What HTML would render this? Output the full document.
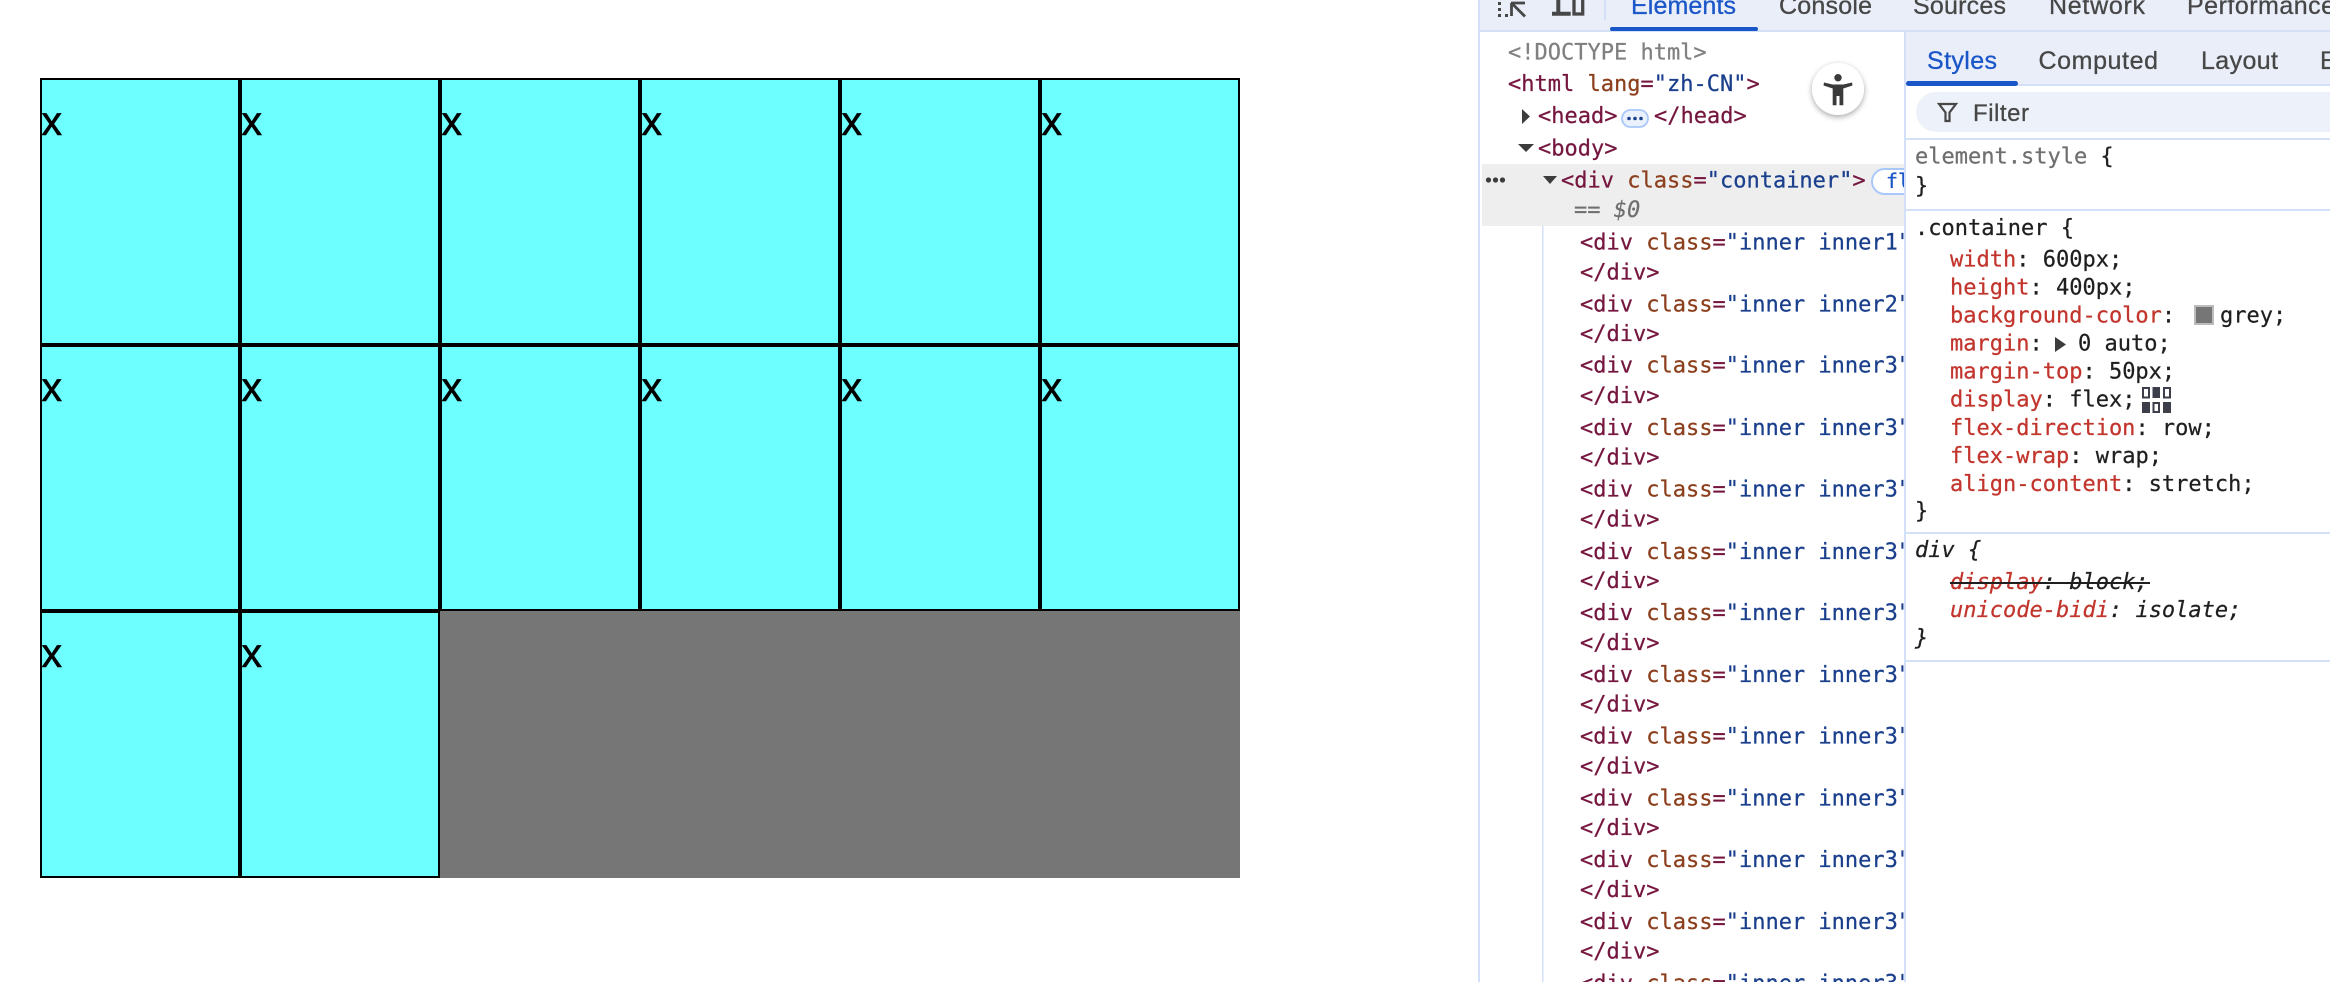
<!DOCTYPE html>
<html lang="zh-CN">
<head>
<meta charset="utf-8">
<title>Flex container</title>
<style>
html,body{margin:0;padding:0;background:#fff;width:2330px;height:982px;overflow:hidden}
svg{display:block}
.x{font:41px "Liberation Sans",Arial,sans-serif;fill:#000;stroke:#000;stroke-width:.6}
.tab{font:25px "Liberation Sans",Arial,sans-serif;fill:#474747;stroke:#474747;stroke-width:.3}
.act{fill:#1a56c8;stroke:#1a56c8}
.d{font:22px "DejaVu Sans Mono","Liberation Mono",monospace;fill:#75163f;stroke:#75163f;stroke-width:.25}
.n{fill:#8c3f1d;stroke:#8c3f1d}
.v{fill:#1a3f8c;stroke:#1a3f8c}
.s{font:22px "DejaVu Sans Mono","Liberation Mono",monospace;fill:#1f1f1f;stroke:#1f1f1f;stroke-width:.25}
.p{fill:#c2352d;stroke:#c2352d}
.g{fill:#6f6f6f;stroke:#6f6f6f}
.i{font-style:italic}
.c{fill:#6dffff;stroke:#000;stroke-width:2}
</style>
</head>
<body>
<svg xmlns="http://www.w3.org/2000/svg" width="2330" height="982" viewBox="0 0 2330 982">
<defs>
<clipPath id="dom"><rect x="1480" y="32" width="424" height="950"/></clipPath>
<filter id="sh" x="-40%" y="-40%" width="180%" height="180%"><feDropShadow dx="0" dy="2" stdDeviation="3" flood-color="#000" flood-opacity=".35"/></filter>
</defs>

<!-- page -->
<rect x="40" y="78" width="1200" height="800" fill="#767676"/>
<rect class="c" x="41" y="79" width="198" height="265"/>
<rect class="c" x="241" y="79" width="198" height="265"/>
<rect class="c" x="441" y="79" width="198" height="265"/>
<rect class="c" x="641" y="79" width="198" height="265"/>
<rect class="c" x="841" y="79" width="198" height="265"/>
<rect class="c" x="1041" y="79" width="198" height="265"/>
<rect class="c" x="41" y="346" width="198" height="264"/>
<rect class="c" x="241" y="346" width="198" height="264"/>
<rect class="c" x="441" y="346" width="198" height="264"/>
<rect class="c" x="641" y="346" width="198" height="264"/>
<rect class="c" x="841" y="346" width="198" height="264"/>
<rect class="c" x="1041" y="346" width="198" height="264"/>
<rect class="c" x="41" y="612" width="198" height="265"/>
<rect class="c" x="241" y="612" width="198" height="265"/>
<text class="x" x="41.500" y="135">x</text><text class="x" x="241.500" y="135">x</text><text class="x" x="441.500" y="135">x</text><text class="x" x="641.500" y="135">x</text><text class="x" x="841.500" y="135">x</text><text class="x" x="1041.500" y="135">x</text>
<text class="x" x="41.500" y="401">x</text><text class="x" x="241.500" y="401">x</text><text class="x" x="441.500" y="401">x</text><text class="x" x="641.500" y="401">x</text><text class="x" x="841.500" y="401">x</text><text class="x" x="1041.500" y="401">x</text>
<text class="x" x="41.500" y="667">x</text><text class="x" x="241.500" y="667">x</text>

<!-- devtools frame -->
<rect x="1478" y="0" width="852" height="982" fill="#fff"/>
<rect x="1478" y="0" width="2" height="982" fill="#d3e0f7"/>
<rect x="1480" y="0" width="850" height="30" fill="#e9eef9"/>
<rect x="1480" y="30" width="850" height="2" fill="#d3e0f7"/>
<rect x="1604" y="0" width="2" height="20" fill="#d3e0f7"/>
<rect x="1610" y="27" width="148" height="4" rx="2" fill="#1a56c8"/>

<!-- toolbar icons -->
<g fill="#474747">
<rect x="1498" y="2" width="3" height="3"/><rect x="1498" y="8" width="3" height="3"/><rect x="1498" y="14" width="3" height="3"/><rect x="1505" y="14" width="3" height="3"/>
</g>
<path d="M1511 3H1525M1511.500 3V16M1511.500 3L1525 16.500" fill="none" stroke="#474747" stroke-width="2.800"/>
<path d="M1558.300 0V13.500M1552 13.800H1570.700" fill="none" stroke="#474747" stroke-width="4"/>
<rect x="1574" y="-3" width="8.700" height="17" fill="none" stroke="#474747" stroke-width="3.300"/>

<!-- top tabs -->
<text class="tab act" x="1631" y="14" textLength="105">Elements</text>
<text class="tab" x="1779" y="14" textLength="93">Console</text>
<text class="tab" x="1913" y="14" textLength="93">Sources</text>
<text class="tab" x="2049" y="14" textLength="96">Network</text>
<text class="tab" x="2187" y="14" textLength="148">Performance</text>

<!-- elements panel -->
<rect x="1482" y="164" width="422" height="62" fill="#eeeeee"/>
<rect x="1542" y="226" width="1.500" height="756" fill="#d3e0f7"/>
<circle cx="1488.500" cy="180" r="2.600" fill="#3c3c3c"/><circle cx="1495.500" cy="180" r="2.600" fill="#3c3c3c"/><circle cx="1502.500" cy="180" r="2.600" fill="#3c3c3c"/>
<path d="M1522 109L1530 116.500L1522 124Z" fill="#3c3c3c"/>
<path d="M1518 144H1534L1526 152Z" fill="#3c3c3c"/>
<path d="M1543 176H1557L1550 184Z" fill="#3c3c3c"/>

<g clip-path="url(#dom)">
<text class="d" x="1508" y="59.500" style="fill:#808080;stroke:#808080">&lt;!DOCTYPE html&gt;</text>
<text class="d" x="1508" y="91">&lt;html <tspan class="n">lang</tspan>=<tspan class="v">"zh-CN"</tspan>&gt;</text>
<text class="d" x="1538" y="123">&lt;head&gt;</text>
<text class="d" x="1654" y="123">&lt;/head&gt;</text>
<text class="d" x="1538" y="155.700">&lt;body&gt;</text>
<text class="d" x="1561" y="187.700">&lt;div <tspan class="n">class</tspan>=<tspan class="v">"container"</tspan>&gt;</text>
<text class="d" x="1574" y="217.200" style="fill:#6f6f6f;stroke:#6f6f6f">== <tspan font-style="italic">$0</tspan></text>
<rect x="1872" y="169" width="60" height="25" rx="12.500" fill="#fff" stroke="#a8c7fa" stroke-width="2"/>
<text class="d" x="1886" y="188" style="fill:#1a56c8;stroke:#1a56c8;font-size:20px">fl</text>

<text class="d" x="1580" y="249.700">&lt;div <tspan class="n">class</tspan>=<tspan class="v">"inner inner1"</tspan></text>
<text class="d" x="1580" y="279.500">&lt;/div&gt;</text>
<text class="d" x="1580" y="311.400">&lt;div <tspan class="n">class</tspan>=<tspan class="v">"inner inner2"</tspan></text>
<text class="d" x="1580" y="341.200">&lt;/div&gt;</text>
<text class="d" x="1580" y="372.700">&lt;div <tspan class="n">class</tspan>=<tspan class="v">"inner inner3"</tspan></text>
<text class="d" x="1580" y="403">&lt;/div&gt;</text>
<text class="d" x="1580" y="434.900">&lt;div <tspan class="n">class</tspan>=<tspan class="v">"inner inner3"</tspan></text>
<text class="d" x="1580" y="464.700">&lt;/div&gt;</text>
<text class="d" x="1580" y="496.700">&lt;div <tspan class="n">class</tspan>=<tspan class="v">"inner inner3"</tspan></text>
<text class="d" x="1580" y="526.500">&lt;/div&gt;</text>
<text class="d" x="1580" y="558.800">&lt;div <tspan class="n">class</tspan>=<tspan class="v">"inner inner3"</tspan></text>
<text class="d" x="1580" y="588.200">&lt;/div&gt;</text>
<text class="d" x="1580" y="620.200">&lt;div <tspan class="n">class</tspan>=<tspan class="v">"inner inner3"</tspan></text>
<text class="d" x="1580" y="650">&lt;/div&gt;</text>
<text class="d" x="1580" y="681.900">&lt;div <tspan class="n">class</tspan>=<tspan class="v">"inner inner3"</tspan></text>
<text class="d" x="1580" y="711.700">&lt;/div&gt;</text>
<text class="d" x="1580" y="743.700">&lt;div <tspan class="n">class</tspan>=<tspan class="v">"inner inner3"</tspan></text>
<text class="d" x="1580" y="773.500">&lt;/div&gt;</text>
<text class="d" x="1580" y="805.400">&lt;div <tspan class="n">class</tspan>=<tspan class="v">"inner inner3"</tspan></text>
<text class="d" x="1580" y="835.200">&lt;/div&gt;</text>
<text class="d" x="1580" y="867.200">&lt;div <tspan class="n">class</tspan>=<tspan class="v">"inner inner3"</tspan></text>
<text class="d" x="1580" y="897">&lt;/div&gt;</text>
<text class="d" x="1580" y="928.900">&lt;div <tspan class="n">class</tspan>=<tspan class="v">"inner inner3"</tspan></text>
<text class="d" x="1580" y="958.700">&lt;/div&gt;</text>
<text class="d" x="1580" y="990.700">&lt;div <tspan class="n">class</tspan>=<tspan class="v">"inner inner3"</tspan></text>
</g>

<!-- ellipsis pill -->
<rect x="1622" y="110" width="26" height="17" rx="8.500" fill="#eaf1fd" stroke="#a8c7fa" stroke-width="1.800"/>
<circle cx="1629" cy="118.500" r="1.800" fill="#1a3f8c"/><circle cx="1635" cy="118.500" r="1.800" fill="#1a3f8c"/><circle cx="1641" cy="118.500" r="1.800" fill="#1a3f8c"/>

<!-- accessibility button -->
<circle cx="1838" cy="89" r="26" fill="#fff" filter="url(#sh)"/>
<circle cx="1838" cy="77.700" r="3.700" fill="#3a3a3a"/>
<path d="M1824 82.500L1832.700 84.500H1843.300L1852 82.500L1852.500 85.500L1843.300 88.500V105.300H1839.500V96H1836.500V105.300H1832.700V88.500L1823.500 85.500Z" fill="#3a3a3a"/>

<!-- styles panel -->
<rect x="1904" y="32" width="2" height="950" fill="#d3e0f7"/>
<rect x="1906" y="32" width="424" height="52" fill="#e9eef9"/>
<rect x="1906" y="84" width="424" height="2" fill="#d3e0f7"/>
<rect x="1906" y="81" width="112" height="5" rx="2.500" fill="#1a56c8"/>
<text class="tab act" x="1927" y="69" textLength="70">Styles</text>
<text class="tab" x="2038.500" y="69" textLength="119.500">Computed</text>
<text class="tab" x="2201" y="69" textLength="77">Layout</text>
<text class="tab" x="2320" y="69">E</text>

<rect x="1916" y="92" width="460" height="40" rx="20" fill="#edf1f9"/>
<path d="M1939 104H1956L1949.500 112.500V121H1945.500V112.500Z" fill="none" stroke="#474747" stroke-width="2.200"/>
<text class="tab" x="1973" y="121" textLength="56" style="font-size:24px">Filter</text>

<rect x="1906" y="138" width="424" height="2" fill="#d3e0f7"/>
<rect x="1906" y="209" width="424" height="2" fill="#d3e0f7"/>
<rect x="1906" y="532" width="424" height="2" fill="#d3e0f7"/>
<rect x="1906" y="660" width="424" height="2" fill="#d3e0f7"/>

<text class="s" x="1915" y="163.700"><tspan class="g">element.style</tspan> {</text>
<text class="s" x="1915" y="193">}</text>
<text class="s" x="1915" y="235">.container {</text>
<text class="s" x="1950" y="266.700"><tspan class="p">width</tspan>: 600px;</text>
<text class="s" x="1950" y="294.700"><tspan class="p">height</tspan>: 400px;</text>
<text class="s" x="1950" y="322.700"><tspan class="p">background-color</tspan>:</text>
<rect x="2195" y="306" width="18" height="18" fill="#767676" stroke="#bcbcbc" stroke-width="2"/>
<text class="s" x="2220" y="322.700">grey;</text>
<text class="s" x="1950" y="350.700"><tspan class="p">margin</tspan>:</text>
<path d="M2055 337L2066 344.500L2055 352Z" fill="#3c3c3c"/>
<text class="s" x="2078" y="350.700">0 auto;</text>
<text class="s" x="1950" y="378.700"><tspan class="p">margin-top</tspan>: 50px;</text>
<text class="s" x="1950" y="406.700"><tspan class="p">display</tspan>: flex;</text>
<g fill="#3c3f4a">
<rect x="2143" y="388" width="6" height="9.500" fill="none" stroke="#3c3f4a" stroke-width="2"/>
<rect x="2152.500" y="387" width="7.500" height="11"/>
<rect x="2164" y="388" width="6" height="9.500" fill="none" stroke="#3c3f4a" stroke-width="2"/>
<rect x="2142" y="402" width="8" height="11"/>
<rect x="2153.500" y="403" width="5.500" height="9" fill="none" stroke="#3c3f4a" stroke-width="2"/>
<rect x="2163" y="402" width="8" height="11"/>
</g>
<text class="s" x="1950" y="435"><tspan class="p">flex-direction</tspan>: row;</text>
<text class="s" x="1950" y="463"><tspan class="p">flex-wrap</tspan>: wrap;</text>
<text class="s" x="1950" y="491"><tspan class="p">align-content</tspan>: stretch;</text>
<text class="s" x="1915" y="518">}</text>
<text class="s i" x="1915" y="557">div {</text>
<text class="s i" x="1950" y="589"><tspan class="p">display</tspan>: block;</text>
<rect x="1950" y="582" width="200" height="2" fill="#1f1f1f"/>
<text class="s i" x="1950" y="617"><tspan class="p">unicode-bidi</tspan>: isolate;</text>
<text class="s i" x="1915" y="645">}</text>
</svg>
</body>
</html>
